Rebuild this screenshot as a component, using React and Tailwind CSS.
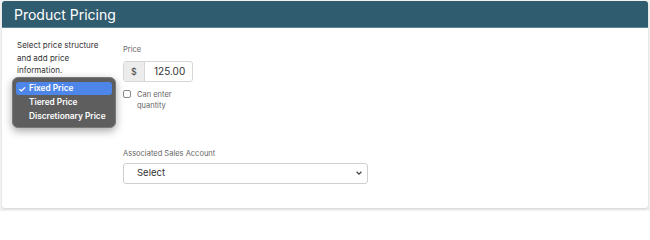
import React from "react";

const font = { fontFamily: 'Inter, "Noto Sans", sans-serif' };

const App = () => {
  return (
    <div className="h-[211px] bg-[#f1f1f1] pt-px px-[2px]" style={font}>
      <div className="h-[207px] bg-white rounded-[3px] shadow-[0_1px_2px_rgba(0,0,0,0.12)]">
        {/* Header */}
        <div className="h-[27px] bg-[#2f5c6f] border-b border-[#5d8394] rounded-t-[3px] flex items-center px-[12px]">
          <h2 className="text-white text-[14px]">Product Pricing</h2>
        </div>

        {/* Body */}
        <div className="flex pt-[11px]">
          {/* Left: description + open select menu */}
          <div className="relative w-[121px] pl-[15px] pr-2">
            <p className="text-[8px] leading-[12.5px] text-[#333]">
              Select price structure
              <br />
              and add price
              <br />
              information.
            </p>
            <div className="absolute left-[10px] top-[38px] w-[104px] rounded-[6px] bg-[#5e5e5e] border border-[#7a7a7a] shadow-[0_3px_8px_rgba(0,0,0,0.35)] px-[3px] py-[4px]">
              <div className="h-[13px] rounded-[3px] bg-[#4d86e8] text-white text-[8.3px] font-semibold flex items-center pl-[2px] whitespace-nowrap">
                <span className="w-[11px] text-[9px]">✓</span>Fixed Price
              </div>
              <div className="h-[14px] text-white text-[8.3px] font-semibold flex items-center pl-[13px] whitespace-nowrap">
                Tiered Price
              </div>
              <div className="h-[14px] text-white text-[8.3px] font-semibold flex items-center pl-[13px] whitespace-nowrap">
                Discretionary Price
              </div>
            </div>
          </div>

          {/* Right: fields */}
          <div className="flex flex-col">
            <label className="text-[7.5px] text-[#666] mt-[5px] mb-[6px]">Price</label>
            <div className="flex h-[21px] w-[70px] border border-[#d6d6d6] rounded-[3px] overflow-hidden">
              <span className="w-[21px] bg-[#ececec] border-r border-[#d6d6d6] flex items-center justify-center text-[9px] text-[#444]">
                $
              </span>
              <span className="flex-1 flex items-center pl-[9px] text-[10px] text-[#333]">125.00</span>
            </div>
            <div className="flex mt-[7px]">
              <span className="mt-[1px] w-[8px] h-[8px] border border-[#888] rounded-[2px] bg-white" />
              <span className="ml-[6px] text-[7.5px] leading-[11px] text-[#666]">
                Can enter
                <br />
                quantity
              </span>
            </div>

            <label className="text-[7.5px] text-[#666] mt-[37px] mb-[3px]">Associated Sales Account</label>
            <div className="flex items-center justify-between h-[21px] w-[245px] border border-[#cfcfcf] rounded-[3px] pl-[13px] pr-[4px]">
              <span className="text-[9.5px] text-[#333]">Select</span>
              <svg width="8" height="8" viewBox="0 0 10 10" fill="none" stroke="#444" strokeWidth="1.6">
                <path d="M2 3.5 L5 6.5 L8 3.5" />
              </svg>
            </div>
          </div>
        </div>
      </div>
    </div>
  );
};

export default App;
